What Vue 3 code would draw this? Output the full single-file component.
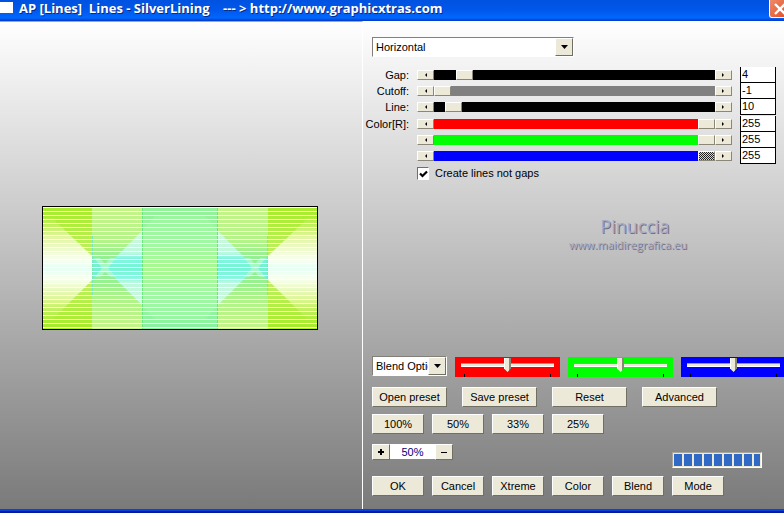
<script setup>
import { computed, reactive, ref } from 'vue'

const title = 'AP [Lines]  Lines - SilverLining    --- > http://www.graphicxtras.com'
const direction = ref('Horizontal')
const directions = ['Horizontal', 'Vertical']
const blend = ref('Blend Options')
const createLines = ref(true)
const zoom = ref('50%')

const params = reactive([
  { id: 'gap', label: 'Gap:', min: 0, max: 48, value: 4, tone: 'black' },
  { id: 'cutoff', label: 'Cutoff:', min: -1, max: 255, value: -1, tone: 'gray' },
  { id: 'line', label: 'Line:', min: 0, max: 240, value: 10, tone: 'black' },
])
const channels = reactive([
  { id: 'red', label: 'Color[R]:', min: 0, max: 255, value: 255, tone: 'red' },
  { id: 'green', label: '', name: 'Color G', min: 0, max: 255, value: 255, tone: 'green' },
  { id: 'blue', label: '', name: 'Color B', min: 0, max: 255, value: 255, tone: 'blue', active: true },
])
const groups = computed(() => [params, channels])

const mixers = reactive([
  { id: 'mix-red', name: 'Red blend', value: 50, tone: 'red' },
  { id: 'mix-green', name: 'Green blend', value: 50, tone: 'green' },
  { id: 'mix-blue', name: 'Blue blend', value: 50, tone: 'blue' },
])

const presetButtons = ['Open preset', 'Save preset', 'Reset', 'Advanced']
const zoomButtons = ['100%', '50%', '33%', '25%']
const actionButtons = ['OK', 'Cancel', 'Xtreme', 'Color', 'Blend', 'Mode']

function step(item, delta) {
  item.value = Math.min(item.max, Math.max(item.min, Number(item.value) + delta))
}
function stepZoom(delta) {
  zoom.value = Math.max(1, parseInt(zoom.value) + delta) + '%'
}
</script>

<template>
  <div class="window">
    <header class="titlebar">
      <span class="app-icon"></span>
      <h1 class="title">{{ title }}</h1>
      <button class="close" type="button" aria-label="Close">
        <svg width="12" height="12" viewBox="0 0 12 12"><path d="M1 1 11 11M11 1 1 11" stroke="#fff" stroke-width="2.4" /></svg>
      </button>
    </header>

    <main class="body">
      <section class="preview">
        <svg class="image" viewBox="0 0 276 124" width="276" height="124">
          <defs>
            <linearGradient id="outer" x1="0" y1="0" x2="0" y2="1">
              <stop offset="0" stop-color="#a6ec28" /><stop offset=".5" stop-color="#c4f270" /><stop offset="1" stop-color="#a6ec28" />
            </linearGradient>
            <linearGradient id="second" x1="0" y1="0" x2="0" y2="1">
              <stop offset="0" stop-color="#c6f488" /><stop offset=".28" stop-color="#b4f488" /><stop offset=".42" stop-color="#92f092" />
              <stop offset=".58" stop-color="#92f092" /><stop offset=".75" stop-color="#aef488" /><stop offset="1" stop-color="#c6f488" />
            </linearGradient>
            <linearGradient id="middle" x1="0" y1="0" x2="0" y2="1">
              <stop offset="0" stop-color="#90f298" /><stop offset=".3" stop-color="#9af6a0" /><stop offset=".5" stop-color="#a2f886" />
              <stop offset=".7" stop-color="#9af6a0" /><stop offset="1" stop-color="#88f29e" />
            </linearGradient>
            <linearGradient id="glow" gradientUnits="userSpaceOnUse" x1="0" y1="10" x2="0" y2="114">
              <stop offset="0" stop-color="#c2f260" stop-opacity=".1" /><stop offset=".2" stop-color="#e2f6a0" /><stop offset=".42" stop-color="#f8fff0" />
              <stop offset=".5" stop-color="#e6fff4" /><stop offset=".6" stop-color="#f8fff0" /><stop offset=".8" stop-color="#dcf694" />
              <stop offset="1" stop-color="#c2f260" stop-opacity=".1" />
            </linearGradient>
            <linearGradient id="aqua" gradientUnits="userSpaceOnUse" x1="0" y1="25" x2="0" y2="99">
              <stop offset="0" stop-color="#d0f8dc" /><stop offset=".3" stop-color="#bcf8de" /><stop offset=".36" stop-color="#84f6e2" />
              <stop offset=".5" stop-color="#74f4d4" /><stop offset=".62" stop-color="#84f6e2" /><stop offset=".7" stop-color="#bcf8de" />
              <stop offset="1" stop-color="#d0f8dc" />
            </linearGradient>
            <g id="wing">
              <rect x="0" y="0" width="50" height="124" fill="url(#outer)" />
              <path d="M0 12H10L50 50V74L10 114H0Z" fill="url(#glow)" />
              <rect x="50" y="0" width="50" height="124" fill="url(#second)" />
              <path d="M50 50 63 62 50 75Z" fill="#74f2d0" />
              <path d="M63 62 100 25V99Z" fill="url(#aqua)" />
              <path d="M52 52H58L63 58 68 52H74L66 62 74 71H69L63 66 58 71H53L60 62Z" fill="#aef8d0" opacity=".8" />
              <path d="M50.500 30V90" stroke="#7ae8b4" />
            </g>
          </defs>
          <use href="#wing" />
          <use href="#wing" transform="translate(276 0) scale(-1 1)" />
          <rect x="100" y="0" width="76" height="124" fill="url(#middle)" />
          <path d="M100 25 113 10H163L176 25V99L163 114H113L100 99Z" fill="#b8ffb0" opacity=".25" />
          <path d="M100.500 0V124M175.500 0V124" stroke="#6ee87e" />
          <rect v-for="n in 31" :key="n" x="0" :y="n * 4 - 3" width="276" height="1" fill="#fff" />
          <rect x=".5" y=".5" width="275" height="123" fill="none" stroke="#000" />
        </svg>
      </section>

      <section class="controls">
        <div class="combo wide">
          <select v-model="direction" aria-label="Direction">
            <option v-for="d in directions" :key="d">{{ d }}</option>
          </select>
          <span class="arrow"><svg width="7" height="4" viewBox="0 0 7 4"><path d="M0 0H7L3.500 4Z" /></svg></span>
        </div>

        <div class="params">
          <div v-for="(group, g) in groups" :key="g" class="group">
            <div v-for="item in group" :key="item.id" class="param">
              <label :for="item.id">{{ item.label }}</label>
              <div class="scroll">
                <button class="tip" type="button" aria-label="Decrease" @click="step(item, -1)">
                  <svg width="3" height="4" viewBox="0 0 3 4"><path d="M3 0V4L1 2Z" /></svg>
                </button>
                <input :id="item.id" v-model="item.value" class="bar" :class="[item.tone, { active: item.active }]" type="range"
                  :min="item.min" :max="item.max" :aria-label="item.name" />
                <button class="tip" type="button" aria-label="Increase" @click="step(item, 1)">
                  <svg width="3" height="4" viewBox="0 0 3 4"><path d="M0 0V4L2 2Z" /></svg>
                </button>
              </div>
              <input v-model="item.value" class="number" type="text" :aria-label="(item.name || item.label) + ' value'" />
            </div>
          </div>
        </div>

        <label class="check">
          <span class="box">
            <input v-model="createLines" type="checkbox" />
            <svg v-if="createLines" width="9" height="8" viewBox="0 0 9 8"><path d="M1 3.500 3.500 6 8 1.500" fill="none" stroke="#000" stroke-width="2.200" /></svg>
          </span>
          Create lines not gaps
        </label>

        <div class="signature">
          <span class="name">Pinuccia</span>
          <span class="site">www.maidiregrafica.eu</span>
        </div>

        <div class="mixers">
          <div class="combo narrow">
            <select v-model="blend" aria-label="Blend">
              <option>Blend Options</option>
            </select>
            <span class="arrow"><svg width="7" height="4" viewBox="0 0 7 4"><path d="M0 0H7L3.500 4Z" /></svg></span>
          </div>
          <div v-for="m in mixers" :key="m.id" class="mixer" :class="m.tone">
            <input v-model="m.value" type="range" min="0" max="100" :aria-label="m.name" />
            <div class="ticks"><i></i><i></i></div>
          </div>
        </div>

        <div class="row presets">
          <button v-for="b in presetButtons" :key="b" class="btn" type="button">{{ b }}</button>
        </div>
        <div class="row scales">
          <button v-for="b in zoomButtons" :key="b" class="btn" type="button" @click="zoom = b">{{ b }}</button>
        </div>
        <div class="status">
          <div class="zoom">
            <button class="btn" type="button" aria-label="Zoom in" @click="stepZoom(1)">
              <svg width="6" height="6" viewBox="0 0 6 6"><path d="M0 2H2V0H4V2H6V4H4V6H2V4H0Z" /></svg>
            </button>
            <input v-model="zoom" type="text" aria-label="Zoom" />
            <button class="btn" type="button" aria-label="Zoom out" @click="stepZoom(-1)">
              <svg width="6" height="1" viewBox="0 0 6 1"><path d="M0 0H6V1H0Z" /></svg>
            </button>
          </div>
          <div class="progress" role="progressbar" aria-label="Progress" aria-valuenow="100"></div>
        </div>
        <div class="row actions">
          <button v-for="b in actionButtons" :key="b" class="btn" type="button">{{ b }}</button>
        </div>
      </section>
    </main>
  </div>
</template>

<style>
body { margin: 0; }
</style>

<style scoped>
.window {
  min-height: 100vh;
  display: flex;
  flex-direction: column;
  overflow: hidden;
  box-sizing: border-box;
  border-bottom: 2px solid #00189c;
  font: 11px/13px "Liberation Sans", Arial, sans-serif;
  color: #000;
}
.window * { box-sizing: border-box; }
button, input, select { font: inherit; color: inherit; margin: 0; padding: 0; border-radius: 0; }

.titlebar {
  height: 21px;
  display: flex;
  align-items: flex-start;
  background: linear-gradient(#0052e0, #0058ec 50%, #0068ff 85%, #0038c8);
}
.app-icon { width: 13px; height: 11px; margin-top: 2px; background: #fff; }
.title {
  flex: 1;
  margin: 0 0 0 6px;
  font: bold 13px/17px "Open Sans", "Noto Sans", sans-serif;
  color: #fff;
  text-shadow: 1px 1px #0a2a86;
  white-space: pre;
}
.close {
  width: 21px;
  height: 18px;
  margin-right: -6px;
  flex: none;
  display: flex;
  align-items: center;
  padding-left: 4px;
  border: 1px solid #fff;
  border-top: 0;
  border-radius: 0 0 3px 3px;
  background: linear-gradient(135deg, #f08a68, #dc4c24);
}

.body {
  flex: 1;
  display: grid;
  grid-template-columns: minmax(0, 363fr) minmax(0, 421fr);
  background: linear-gradient(#fff, #7a7a7a);
  border-bottom: 2px solid #0044e4;
}
.preview {
  display: flex;
  align-items: center;
  justify-content: center;
  padding: 5px 2px 0 0;
  border-top: 1px solid #aca899;
  border-right: 1px solid #fff;
}
.image { display: block; flex: none; }
.controls {
  display: flex;
  flex-direction: column;
  padding: 16px 0 13px 9px;
}

.combo {
  display: grid;
  grid-template-columns: 1fr 18px;
  height: 20px;
  background: #fff;
  border: 1px solid;
  border-color: #848078 #fff #fff #848078;
}
.combo.wide { width: 202px; }
.combo.narrow { width: 75px; flex: none; }
.combo select {
  grid-area: 1 / 1 / 2 / 2;
  min-width: 0;
  appearance: none;
  border: 0;
  background: none;
  padding-left: 3px;
  outline: 0;
}
.arrow {
  grid-area: 1 / 2 / 2 / 3;
  display: flex;
  align-items: center;
  justify-content: center;
  pointer-events: none;
  background: #ece9d8;
  border: 1px solid;
  border-color: #fff #716f64 #716f64 #fff;
}

.params { margin-top: 10px; display: flex; flex-direction: column; gap: 1px; }
.param {
  display: grid;
  grid-template-columns: 37px minmax(0, 315px) 36px;
  column-gap: 8px;
  align-items: center;
  height: 16px;
}
.param label { justify-self: end; white-space: nowrap; padding-top: 1px; }
.scroll { display: flex; height: 10px; }
.tip {
  width: 17px;
  flex: none;
  display: flex;
  align-items: center;
  justify-content: center;
  background: #ece9d8;
  border: 1px solid;
  border-color: #fff #8a8678 #8a8678 #fff;
}
.bar {
  appearance: none;
  flex: 1;
  min-width: 0;
  height: 10px;
  outline: 0;
}
.bar::-webkit-slider-thumb {
  appearance: none;
  width: 17px;
  height: 10px;
  background: #ece9d8;
  border: 1px solid;
  border-color: #fff #8a8678 #8a8678 #fff;
}
.bar.active::-webkit-slider-thumb {
  background: repeating-conic-gradient(#222 0 25%, #d8d5c6 0 50%) 0 0 / 2px 2px;
}
.black { background: #000; }
.gray { background: #808080; }
.red { background: #f00; }
.green { background: #0f0; }
.blue { background: #00f; }
.number {
  width: 36px;
  height: 16px;
  border: 1px solid #000;
  border-top: 0;
  background: #fff;
  padding: 0 0 2px 1px;
  outline: 0;
}

.check {
  align-self: flex-start;
  display: flex;
  align-items: center;
  gap: 6px;
  margin: 3px 0 0 45px;
}
.box { display: grid; place-items: center; width: 12px; height: 13px; }
.box > * { grid-area: 1 / 1; }
.box input {
  appearance: none;
  width: 12px;
  height: 13px;
  background: #fff;
  border: 1px solid;
  border-color: #716f64 #fff #fff #716f64;
}
.box svg { pointer-events: none; }

.signature {
  align-self: flex-start;
  display: flex;
  flex-direction: column;
  align-items: center;
  margin: 34px 0 0 197px;
  color: #a9a9c6;
  text-shadow: 1px 1px #70707e;
}
.name { font: 18px/24px "Open Sans", sans-serif; padding-left: 14px; }
.site { font: 11px/14px "Open Sans", sans-serif; }

.mixers { margin-top: auto; display: flex; gap: 8px; align-items: center; height: 22px; }
.mixer { width: 105px; height: 20px; flex: none; padding: 1px 6px 0; margin-top: 2px; }
.mixer input {
  appearance: none;
  display: block;
  width: 100%;
  height: 14px;
  background: linear-gradient(#9c9a8c 0 1px, #ece9d8 1px 3px, #fff 3px) 0 5px / 100% 4px no-repeat;
  outline: 0;
}
.mixer input::-webkit-slider-thumb {
  appearance: none;
  width: 7px;
  height: 14px;
  background: linear-gradient(90deg, #fff 0 1px, #ece9d8 1px 5px, #8a8678 5px);
  clip-path: polygon(0 0, 100% 0, 100% 75%, 50% 100%, 0 75%);
}
.ticks { display: flex; justify-content: space-between; padding: 2px 3px 0; }
.ticks i { width: 1px; height: 3px; background: #000; }

.row { display: flex; }
.btn {
  height: 20px;
  display: flex;
  align-items: center;
  justify-content: center;
  background: #ece9d8;
  border: 1px solid;
  border-color: #fff #716f64 #716f64 #fff;
  white-space: nowrap;
}
.presets { margin-top: 10px; gap: 15px; }
.presets .btn { width: 75px; }
.scales { margin-top: 7px; gap: 8px; }
.scales .btn, .actions .btn { width: 52px; }
.actions { margin-top: 8px; gap: 8px; }
.status { display: flex; height: 24px; margin-top: 10px; align-items: flex-end; }
.zoom { display: flex; align-self: flex-start; width: 300px; }
.zoom .btn { width: 18px; height: 16px; }
.zoom input {
  width: 45px;
  height: 15px;
  border: 0;
  background: #fff;
  color: #000080;
  text-align: center;
  outline: 0;
}
.progress {
  width: 90px;
  height: 16px;
  border: 1px solid #fff;
  border-top-color: #aca899;
  border-left-color: #aca899;
  padding: 1px;
  background: repeating-linear-gradient(90deg, #316ac5 0 8px, #ece9d8 8px 10px) content-box, #ece9d8;
}
</style>
